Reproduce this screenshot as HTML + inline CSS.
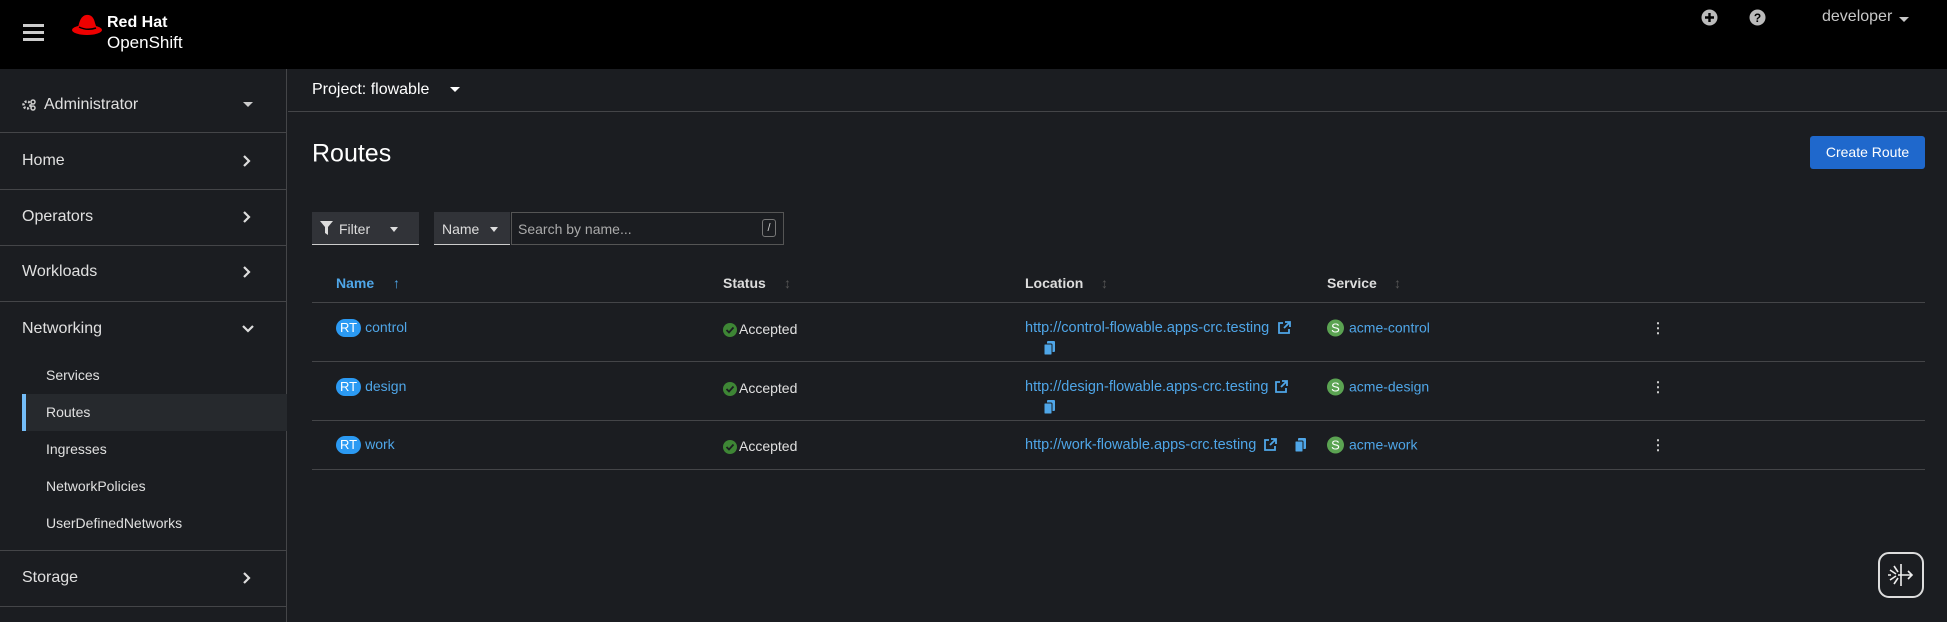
<!DOCTYPE html>
<html><head><meta charset="utf-8"><style>
*{box-sizing:border-box;margin:0;padding:0}
body{width:1947px;height:622px;overflow:hidden;background:#1b1d21;font-family:"Liberation Sans",sans-serif;color:#e0e0e0;position:relative}
.abs{position:absolute}
.hdr{left:0;top:0;width:1947px;height:69px;background:#000}
.side{left:0;top:69px;width:287px;height:553px;background:#1b1d21;border-right:1px solid #444548}
.hl{position:absolute;left:0;width:287px;height:1px;background:#444548}
.nav{position:absolute;left:22px;font-size:16px;color:#e0e0e0;transform:translateY(-50%)}
.sub{position:absolute;left:46px;font-size:14px;color:#e0e0e0;transform:translateY(-50%)}
.chev{position:absolute;left:242px;transform:translateY(-50%)}
.t{position:absolute;transform:translateY(-50%);font-size:14px;white-space:nowrap}
.link{color:#4fa6e8}
.rt{display:inline-block;background:#2b9af3;color:#fff;border-radius:10px;padding:0 4px;font-size:13px;line-height:18px;margin-right:4px}
.s{display:inline-block;background:#5ba352;color:#fff;border-radius:50%;width:17px;height:17px;text-align:center;font-size:13px;line-height:17px;margin-right:5px}
.row{position:absolute;left:312px;width:1613px;height:1px;background:#444548}
.ok{display:inline-block;vertical-align:-3px;margin-right:2px}
</style></head><body>
<div class="abs hdr"></div>
<div class="abs" style="left:23px;top:24px;width:21px;height:3px;background:#ccc;box-shadow:0 7px 0 #ccc,0 14px 0 #ccc"></div>
<svg class="abs" style="left:71px;top:13px" width="33" height="25" viewBox="0 0 33 25"><ellipse cx="16" cy="17" rx="15" ry="5" fill="#e00"/><path d="M7 15 Q9 3 15 2 Q22 1 24 10 L26 16 Z" fill="#e00"/><path d="M8 14 Q16 18 25 15" stroke="#000" stroke-width="1.5" fill="none"/></svg>
<div class="abs" style="left:107px;top:14px;font-size:16px;font-weight:bold;color:#fff">Red Hat</div>
<div class="abs" style="left:107px;top:33px;font-size:17px;color:#fff">OpenShift</div>
<svg class="abs" style="left:1701px;top:9px" width="17" height="17"><circle cx="8.5" cy="8.5" r="8" fill="#bbb"/><path d="M8.5 4v9M4 8.5h9" stroke="#000" stroke-width="2.4"/></svg>
<svg class="abs" style="left:1749px;top:9px" width="17" height="17"><circle cx="8.5" cy="8.5" r="8" fill="#bbb"/><text x="8.5" y="13" text-anchor="middle" font-size="12" font-weight="bold" font-family="Liberation Sans" fill="#000">?</text></svg>
<div class="abs" style="left:1822px;top:8px;font-size:16px;color:#c8c8c8">developer</div>
<div class="abs" style="left:1899px;top:17px;border:5px solid transparent;border-top:5px solid #c8c8c8;border-bottom:0"></div>

<div class="abs side">
<div class="hl" style="top:63px"></div><div class="hl" style="top:120px"></div><div class="hl" style="top:176px"></div><div class="hl" style="top:232px"></div><div class="hl" style="top:481px"></div><div class="hl" style="top:537px"></div>
</div>
<svg class="abs" style="left:22px;top:99px" width="14" height="12" viewBox="0 0 14 12"><circle cx="5" cy="6" r="3.5" fill="none" stroke="#ccc" stroke-width="2.5" stroke-dasharray="2 1.5"/><circle cx="11" cy="3" r="2" fill="none" stroke="#ccc" stroke-width="1.5"/><circle cx="11" cy="9" r="2" fill="none" stroke="#ccc" stroke-width="1.5"/></svg>
<div class="nav" style="left:44px;top:105px;font-size:16px">Administrator</div>
<div class="abs" style="left:243px;top:102px;border:5px solid transparent;border-top:5px solid #ccc;border-bottom:0"></div>
<svg width="0" height="0" style="position:absolute"><defs></defs></svg>
<div class="nav" style="top:161px">Home</div><svg class="chev" style="top:161px" width="10" height="12"><path d="M2 1l5 5-5 5" stroke="#ddd" stroke-width="2.2" fill="none"/></svg>
<div class="nav" style="top:217px">Operators</div><svg class="chev" style="top:217px" width="10" height="12"><path d="M2 1l5 5-5 5" stroke="#ddd" stroke-width="2.2" fill="none"/></svg>
<div class="nav" style="top:272px">Workloads</div><svg class="chev" style="top:272px" width="10" height="12"><path d="M2 1l5 5-5 5" stroke="#ddd" stroke-width="2.2" fill="none"/></svg>
<div class="nav" style="top:329px">Networking</div><svg class="chev" style="top:329px" width="12" height="10"><path d="M1 2l5 5 5-5" stroke="#ddd" stroke-width="2.2" fill="none"/></svg>
<div class="sub" style="top:375px">Services</div>
<div class="abs" style="left:22px;top:394px;width:265px;height:37px;background:#26292d;border-left:4px solid #73bcf7"></div>
<div class="sub" style="top:412px">Routes</div>
<div class="sub" style="top:449px">Ingresses</div>
<div class="sub" style="top:486px">NetworkPolicies</div>
<div class="sub" style="top:523px">UserDefinedNetworks</div>
<div class="nav" style="top:578px">Storage</div><svg class="chev" style="top:578px" width="10" height="12"><path d="M2 1l5 5-5 5" stroke="#ddd" stroke-width="2.2" fill="none"/></svg>

<div class="abs" style="left:288px;top:111px;width:1659px;height:1px;background:#444548"></div>
<div class="t" style="left:312px;top:90px;font-size:16px;color:#fff">Project: flowable</div>
<div class="abs" style="left:450px;top:87px;border:5px solid transparent;border-top:5px solid #fff;border-bottom:0"></div>
<div class="t" style="left:312px;top:154px;font-size:25px;color:#fff">Routes</div>
<div class="abs" style="left:1810px;top:136px;width:115px;height:33px;background:#1f68cc;border-radius:3px;color:#fff;font-size:14px;text-align:center;line-height:33px">Create Route</div>

<div class="abs" style="left:312px;top:212px;width:107px;height:33px;background:#313338;border-bottom:1px solid #ccc"></div>
<svg class="abs" style="left:320px;top:221px" width="13" height="14"><path d="M0 0h13L8 6v8L5 12V6z" fill="#ddd"/></svg>
<div class="t" style="left:339px;top:229px;color:#ddd">Filter</div>
<div class="abs" style="left:390px;top:227px;border:4px solid transparent;border-top:5px solid #ddd;border-bottom:0"></div>
<div class="abs" style="left:434px;top:212px;width:76px;height:33px;background:#313338;border-bottom:1px solid #ccc"></div>
<div class="t" style="left:442px;top:229px;color:#ddd">Name</div>
<div class="abs" style="left:490px;top:227px;border:4px solid transparent;border-top:5px solid #ddd;border-bottom:0"></div>
<div class="abs" style="left:511px;top:212px;width:273px;height:33px;border:1px solid #555"></div>
<div class="t" style="left:518px;top:229px;color:#aaa">Search by name...</div>
<div class="abs" style="left:762px;top:219px;width:14px;height:18px;border:1px solid #777;border-radius:3px;font-size:11px;text-align:center;line-height:16px;color:#ccc">/</div>

<div class="t link" style="left:336px;top:283px;font-weight:bold;color:#4fa6e8">Name</div>
<div class="t" style="left:393px;top:283px;color:#4fa6e8;font-weight:bold">↑</div>
<div class="t" style="left:723px;top:283px;font-weight:bold;color:#ddd">Status</div><div class="t" style="left:784px;top:283px;color:#555">↕</div>
<div class="t" style="left:1025px;top:283px;font-weight:bold;color:#ddd">Location</div><div class="t" style="left:1101px;top:283px;color:#555">↕</div>
<div class="t" style="left:1327px;top:283px;font-weight:bold;color:#ddd">Service</div><div class="t" style="left:1394px;top:283px;color:#555">↕</div>
<div class="row" style="top:302px"></div><div class="row" style="top:361px"></div><div class="row" style="top:420px"></div><div class="row" style="top:469px"></div>

<svg width="0" height="0" style="position:absolute"><defs>
<g id="chk"><circle cx="7" cy="7" r="7" fill="#3e8635"/><path d="M3.5 7l2.5 2.5 4.5-5" stroke="#1b1d21" stroke-width="1.8" fill="none"/></g>
<g id="ext"><path d="M5 2H1v10h10V8M7 1h5v5M12 1L6 7" stroke="#4fa6e8" stroke-width="1.8" fill="none"/></g>
<g id="cp"><rect x="4" y="0" width="8" height="11" rx="1" fill="#4fa6e8"/><rect x="1" y="3" width="8" height="11" rx="1" fill="#4fa6e8" stroke="#1b1d21" stroke-width="1"/></g>
</defs></svg>

<div class="t link" style="left:336px;top:328px"><span class="rt">RT</span>control</div>
<div class="t" style="left:723px;top:329px"><svg class="ok" width="14" height="14"><use href="#chk"/></svg>Accepted</div>
<div class="t link" style="left:1025px;top:328px;font-size:14.5px">http://control-flowable.apps-crc.testing</div>
<svg class="abs" style="left:1278px;top:321px" width="13" height="13"><use href="#ext"/></svg>
<svg class="abs" style="left:1043px;top:341px" width="13" height="14"><use href="#cp"/></svg>
<div class="t link" style="left:1327px;top:328px"><span class="s">S</span>acme-control</div>
<div class="t" style="left:1651px;top:328px;font-weight:bold;color:#ccc">⋮</div>

<div class="t link" style="left:336px;top:387px"><span class="rt">RT</span>design</div>
<div class="t" style="left:723px;top:388px"><svg class="ok" width="14" height="14"><use href="#chk"/></svg>Accepted</div>
<div class="t link" style="left:1025px;top:387px;font-size:14.5px">http://design-flowable.apps-crc.testing</div>
<svg class="abs" style="left:1275px;top:380px" width="13" height="13"><use href="#ext"/></svg>
<svg class="abs" style="left:1043px;top:400px" width="13" height="14"><use href="#cp"/></svg>
<div class="t link" style="left:1327px;top:387px"><span class="s">S</span>acme-design</div>
<div class="t" style="left:1651px;top:387px;font-weight:bold;color:#ccc">⋮</div>

<div class="t link" style="left:336px;top:445px"><span class="rt">RT</span>work</div>
<div class="t" style="left:723px;top:446px"><svg class="ok" width="14" height="14"><use href="#chk"/></svg>Accepted</div>
<div class="t link" style="left:1025px;top:445px;font-size:14.5px">http://work-flowable.apps-crc.testing</div>
<svg class="abs" style="left:1264px;top:438px" width="13" height="13"><use href="#ext"/></svg>
<svg class="abs" style="left:1294px;top:438px" width="13" height="14"><use href="#cp"/></svg>
<div class="t link" style="left:1327px;top:445px"><span class="s">S</span>acme-work</div>
<div class="t" style="left:1651px;top:445px;font-weight:bold;color:#ccc">⋮</div>

<div class="abs" style="left:1878px;top:552px;width:46px;height:46px;border:2px solid #ddd;border-radius:11px;background:#1b1d21"></div>
<svg class="abs" style="left:1885px;top:560px" width="32" height="30"><path d="M16 4v22M13 15h14M23 11l4 4-4 4M5 10l6 4M5 20l6-4M9 6l4 6M9 24l4-6M3 15h3" stroke="#eee" stroke-width="1.6" fill="none"/></svg>
</body></html>
